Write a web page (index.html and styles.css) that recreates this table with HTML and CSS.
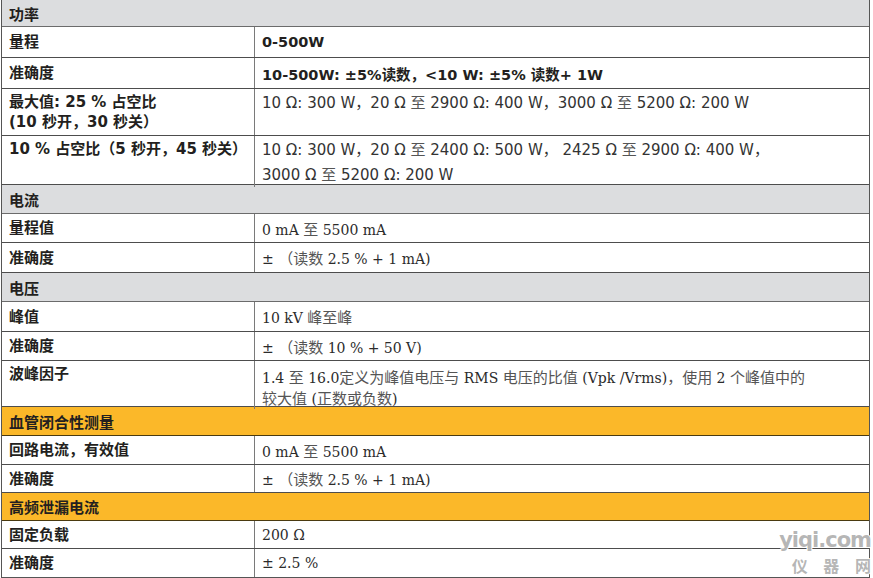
FILE: index.html
```html
<!DOCTYPE html>
<html lang="zh-CN">
<head>
<meta charset="utf-8">
<title>规格</title>
<link rel="stylesheet" href="styles.css">
</head>
<body>
<div class="sheet">
  <div class="row sec gray h27"><div class="sec-t">功率</div></div>
  <div class="row h31"><div class="lab">量程</div><div class="val bold"><span>0-500W</span></div></div>
  <div class="row h31"><div class="lab">准确度</div><div class="val bold"><span>10-500W: ±5%读数，&lt;10 W: ±5% 读数+ 1W</span></div></div>
  <div class="row h47 top"><div class="lab two">最大值: 25 % 占空比<br>(10 秒开，30 秒关）</div><div class="val sans two"><span>10 Ω: 300 W，20 Ω <span class="zh">至</span> 2900 Ω: 400 W，3000 Ω <span class="zh">至</span> 5200 Ω: 200 W</span></div></div>
  <div class="row h49 top"><div class="lab two">10 % 占空比（5 秒开，45 秒关）</div><div class="val sans wide"><span>10 Ω: 300 W，20 Ω <span class="zh">至</span> 2400 Ω: 500 W， 2425 Ω <span class="zh">至</span> 2900 Ω: 400 W，<br>3000 Ω <span class="zh">至</span> 5200 Ω: 200 W</span></div></div>
  <div class="row sec gray h29"><div class="sec-t">电流</div></div>
  <div class="row h29"><div class="lab">量程值</div><div class="val serif"><span>0 mA <span class="zh">至</span> 5500 mA</span></div></div>
  <div class="row h30"><div class="lab">准确度</div><div class="val serif"><span>± <span class="zh">（读数</span> 2.5 % + 1 mA)</span></div></div>
  <div class="row sec gray h29"><div class="sec-t">电压</div></div>
  <div class="row h30"><div class="lab">峰值</div><div class="val serif"><span>10 kV <span class="zh">峰至峰</span></span></div></div>
  <div class="row h29"><div class="lab">准确度</div><div class="val serif"><span>± <span class="zh">（读数</span> 10 % + 50 V)</span></div></div>
  <div class="row h46 top"><div class="lab two">波峰因子</div><div class="val serif tight"><span>1.4 <span class="zh">至</span> 16.0<span class="zh">定义为峰值电压与</span> RMS <span class="zh">电压的比值</span> (Vpk /Vrms)<span class="zh">，使用</span> 2 <span class="zh">个峰值中的</span><br><span class="zh">较大值</span> (<span class="zh">正数或负数</span>)</span></div></div>
  <div class="row sec orange h29"><div class="sec-t">血管闭合性测量</div></div>
  <div class="row h29"><div class="lab">回路电流，有效值</div><div class="val serif"><span>0 mA <span class="zh">至</span> 5500 mA</span></div></div>
  <div class="row h28"><div class="lab">准确度</div><div class="val serif"><span>± <span class="zh">（读数</span> 2.5 % + 1 mA)</span></div></div>
  <div class="row sec orange h28"><div class="sec-t">高频泄漏电流</div></div>
  <div class="row h28"><div class="lab">固定负载</div><div class="val serif"><span>200 Ω</span></div></div>
  <div class="row h28"><div class="lab">准确度</div><div class="val serif"><span>± 2.5 %</span></div></div>
</div>
<div class="watermark"><div class="wm-top">yiqi.com</div><div class="wm-bot">仪 器 网</div></div>
</body>
</html>
```

FILE: styles.css
```css
html, body {
  margin: 0;
  padding: 0;
  background: #ffffff;
}
body {
  width: 873px;
  height: 578px;
  overflow: hidden;
  position: relative;
  font-family: "DejaVu Sans", "Noto Sans CJK SC", sans-serif;
  color: #231f20;
}
.sheet {
  margin-left: 1px;
  width: 869px;
  box-sizing: border-box;
  border-left: 1px solid #555;
  border-right: 1px solid #555;
  border-bottom: 1px solid #555;
}
.row {
  display: grid;
  grid-template-columns: 252px 1fr;
  box-sizing: border-box;
  border-bottom: 1px solid #4d4d4d;
  align-items: center;
}
.row:last-child { border-bottom: none; }
.row.top { align-items: start; }
.sec { display: flex; align-items: center; }
.gray { background: #dcdddf; border-bottom-color: #6b6b6b; }
.orange { background: #fbb829; border-bottom-color: #4a3a10; }
.sec-t {
  padding-left: 7px;
  font-family: "Noto Sans CJK SC", sans-serif;
  font-size: 15px;
  font-weight: 700;
  color: #231f20;
}
.h27 { height: 27px; }
.h28 { height: 28px; }
.h29 { height: 29px; }
.h30 { height: 30px; }
.h31 { height: 31px; }
.h46 { height: 46px; }
.h47 { height: 47px; }
.h49 { height: 49px; }
.lab {
  padding-left: 7px;
  font-family: "DejaVu Sans", "Noto Sans CJK SC", sans-serif;
  font-size: 15px;
  font-weight: 700;
  color: #231f20;
  line-height: 20px;
  white-space: nowrap;
}
.val {
  align-self: stretch;
  display: flex;
  align-items: center;
  border-left: 1px solid #7a7a7a;
  padding-left: 7px;
  font-size: 15px;
  color: #2b2b2b;
  white-space: nowrap;
}
.row.top .val { display: block; }
.lab.two { padding-top: 3px; }
.val.two { padding-top: 3px; line-height: 20px; }
.val.wide { padding-top: 1px; line-height: 24px; }
.val.tight { padding-top: 6px; line-height: 19px; }
.bold {
  font-family: "DejaVu Sans", "Noto Sans CJK SC", sans-serif;
  font-weight: 700;
  font-size: 14.5px;
  color: #231f20;
}
.sans {
  font-family: "DejaVu Sans", "Noto Sans CJK SC", sans-serif;
  color: #333;
}
.sans .zh { color: #555; }
.serif {
  font-family: "DejaVu Serif", "Noto Sans CJK SC", serif;
  font-size: 14px;
  color: #2b2b2b;
}
.zh {
  font-family: "Noto Sans CJK SC", sans-serif;
  font-size: 15px;
  color: #555;
}
.watermark {
  position: absolute;
  right: 2px;
  bottom: 0;
  width: 112px;
  text-align: right;
  font-family: "DejaVu Sans", sans-serif;
  font-weight: 700;
  color: rgba(150, 150, 150, 0.7);
  text-shadow: -1px 0 #fff, 1px 0 #fff, 0 -1px #fff, 0 1px #fff;
}
.wm-top { font-size: 21px; line-height: 25px; letter-spacing: -1px; }
.wm-bot {
  font-family: "Noto Sans CJK SC", sans-serif;
  font-size: 16px;
  line-height: 25px;
  word-spacing: 12px;
}
```
